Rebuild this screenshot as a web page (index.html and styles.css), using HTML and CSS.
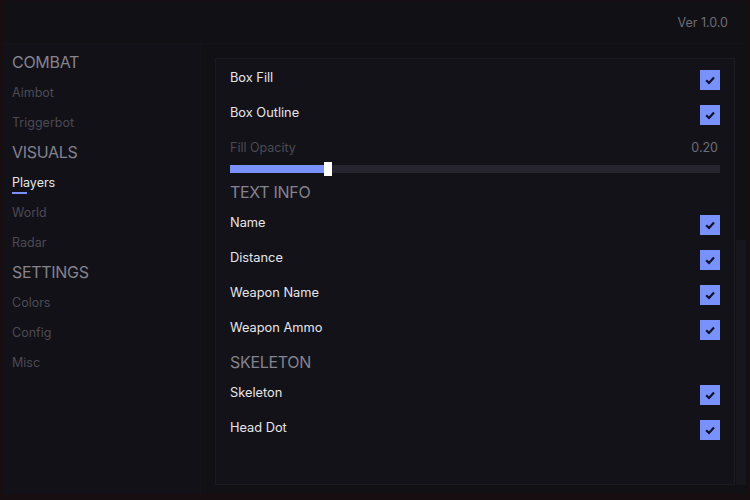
FILE: index.html
```html
<!DOCTYPE html>
<html>
  <head>
  <link rel="stylesheet" href="styles.css">
  </head>
  <body>

    <div class="window">
      <div class="titlebar">
        <span class="version">Ver 1.0.0</span>
      </div>

      <div class="body">
        <nav class="sidebar">
          <div class="group">COMBAT</div>
          <div class="tab">Aimbot</div>
          <div class="tab">Triggerbot</div>
          <div class="group">VISUALS</div>
          <div class="tab active">Players</div>
          <div class="tab">World</div>
          <div class="tab">Radar</div>
          <div class="group">SETTINGS</div>
          <div class="tab">Colors</div>
          <div class="tab">Config</div>
          <div class="tab">Misc</div>
        </nav>

        <main class="content">
          <div class="panel">
            <div class="option">
              <span>Box Fill</span>
              <span class="check"><svg viewBox="0 0 20 20"><path d="M6.2 10.2l2.8 2.8 5-5.6"/></svg></span>
            </div>
            <div class="option">
              <span>Box Outline</span>
              <span class="check"><svg viewBox="0 0 20 20"><path d="M6.2 10.2l2.8 2.8 5-5.6"/></svg></span>
            </div>

            <div class="slider">
              <div class="slider-label">
                <span>Fill Opacity</span>
                <span class="value">0.20</span>
              </div>
              <div class="track">
                <div class="fill" style="width: 20%"></div>
                <div class="thumb"></div>
              </div>
            </div>

            <div class="section">TEXT INFO</div>
            <div class="option">
              <span>Name</span>
              <span class="check"><svg viewBox="0 0 20 20"><path d="M6.2 10.2l2.8 2.8 5-5.6"/></svg></span>
            </div>
            <div class="option">
              <span>Distance</span>
              <span class="check"><svg viewBox="0 0 20 20"><path d="M6.2 10.2l2.8 2.8 5-5.6"/></svg></span>
            </div>
            <div class="option">
              <span>Weapon Name</span>
              <span class="check"><svg viewBox="0 0 20 20"><path d="M6.2 10.2l2.8 2.8 5-5.6"/></svg></span>
            </div>
            <div class="option">
              <span>Weapon Ammo</span>
              <span class="check"><svg viewBox="0 0 20 20"><path d="M6.2 10.2l2.8 2.8 5-5.6"/></svg></span>
            </div>

            <div class="section">SKELETON</div>
            <div class="option">
              <span>Skeleton</span>
              <span class="check"><svg viewBox="0 0 20 20"><path d="M6.2 10.2l2.8 2.8 5-5.6"/></svg></span>
            </div>
            <div class="option">
              <span>Head Dot</span>
              <span class="check"><svg viewBox="0 0 20 20"><path d="M6.2 10.2l2.8 2.8 5-5.6"/></svg></span>
            </div>
          </div>
          <div class="scrollbar">
            <div class="scroll-thumb"></div>
          </div>
        </main>
      </div>
    </div>

  </body>
</html>
```

FILE: styles.css
```css
html, body {
  height: 100%;
}
body {
  --bg: #111015;
  --side: #121117;
  --panel: #131219;
  --line: #1b1a21;
  --accent: #7891fb;
  --text: #e6e6ea;
  --muted: #4b4a55;
  --heading: #84838f;

  margin: 0;
  background-color: #170e11;
  font-family: Inter, "Noto Sans", sans-serif;
  overflow: hidden;
}

.window {
  height: 493px;
  margin: 1px 4px 0 4px;
  background-color: var(--bg);
  display: flex;
  flex-direction: column;
}

.titlebar {
  height: 42px;
  flex-shrink: 0;
  display: flex;
  align-items: center;
  justify-content: flex-end;
  padding-right: 18px;
  border-bottom: 1px solid #141318;
}

.version {
  font-size: 12.5px;
  color: #6e6d78;
  padding-top: 1px;
}

.body {
  flex-grow: 1;
  display: flex;
  min-height: 0;
}

/* left navigation */
.sidebar {
  width: 196px;
  flex-shrink: 0;
  background-color: var(--side);
  padding: 3px 0 0 8px;
  box-sizing: border-box;
}

.group,
.tab {
  height: 30px;
  display: flex;
  align-items: center;
}
.group {
  font-size: 16px;
  letter-spacing: -0.3px;
  color: var(--heading);
}
.tab {
  font-size: 12.5px;
  color: var(--muted);
}
.tab.active {
  color: var(--text);
  position: relative;
}
.tab.active::after {
  content: "";
  position: absolute;
  left: 0;
  bottom: 3px;
  width: 15px;
  height: 2px;
  background-color: var(--accent);
}

/* settings area */
.content {
  flex-grow: 1;
  display: flex;
  padding: 14px 0 9px 14px;
  background-color: var(--bg);
  border-left: 1px solid #141319;
}

.panel {
  flex-grow: 1;
  background-color: var(--panel);
  border: 1px solid var(--line);
  padding: 1px 14px 0 14px;
}

.option {
  height: 35px;
  display: flex;
  align-items: center;
  justify-content: space-between;
  font-size: 12.8px;
  color: var(--text);
}

.check {
  width: 20px;
  height: 20px;
  margin-top: 4px;
  background-color: var(--accent);
  display: flex;
}
.check svg {
  width: 20px;
  height: 20px;
}
.check path {
  fill: none;
  stroke: #11112a;
  stroke-width: 2.2;
}

.slider {
  padding: 9px 0 2px;
}
.slider-label {
  display: flex;
  justify-content: space-between;
  font-size: 12.5px;
  color: var(--muted);
  height: 16px;
  align-items: center;
}
.slider-label .value {
  color: #6e6d78;
  padding-right: 2px;
}
.track {
  margin-top: 10px;
  height: 8px;
  background-color: #26252d;
  position: relative;
}
.fill {
  height: 100%;
  background-color: var(--accent);
}
.thumb {
  position: absolute;
  left: calc(20% - 4px);
  top: -3px;
  width: 8px;
  height: 14px;
  background-color: #ffffff;
}

.section {
  height: 30px;
  box-sizing: border-box;
  padding-top: 4px;
  display: flex;
  align-items: center;
  font-size: 16px;
  letter-spacing: -0.3px;
  color: var(--heading);
}

.scrollbar {
  width: 10px;
  flex-shrink: 0;
  margin-left: 1px;
  display: flex;
  flex-direction: column;
  justify-content: flex-end;
}
.scroll-thumb {
  height: 245px;
  background-color: #17161c;
}
```
